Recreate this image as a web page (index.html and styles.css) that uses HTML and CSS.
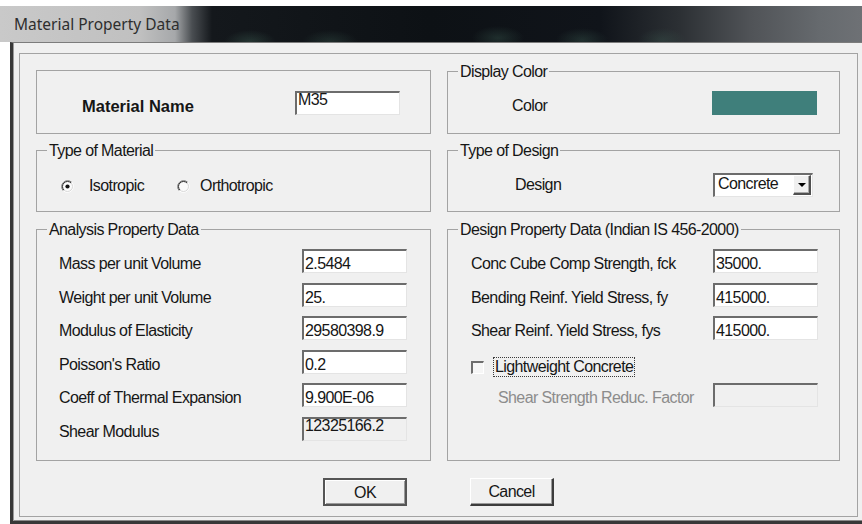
FILE: index.html
```html
<!DOCTYPE html>
<html lang="en">
<head>
<meta charset="utf-8">
<title>Material Property Data</title>
<link rel="stylesheet" href="styles.css">
</head>
<body>
<div class="screen">
  <div class="titlebar"><span class="title">Material Property Data</span></div>
  <div class="frame">
    <div class="panel">
      <div class="columns">
        <div class="col">
          <div class="namebox">
            <span class="name-label">Material Name</span>
            <span class="field top">M35</span>
          </div>
          <fieldset class="group g-short g-mid">
            <legend>Type of Material</legend>
            <div class="radios">
              <span class="radio">
                <svg class="radio-ico" width="13" height="13" viewBox="0 0 13 13">
                  <circle cx="6.5" cy="6.5" r="5.5" fill="#fbfbfb"/>
                  <path d="M10.74 2.26A6 6 0 0 0 2.26 10.74" fill="none" stroke="#7a7a7a"/>
                  <path d="M10.04 2.96A5 5 0 0 0 2.96 10.04" fill="none" stroke="#2e2e2e"/>
                  <path d="M2.26 10.74A6 6 0 0 0 10.74 2.26" fill="none" stroke="#ffffff"/>
                  <path d="M2.96 10.04A5 5 0 0 0 10.04 2.96" fill="none" stroke="#d8d8d8"/>
                  <circle cx="6.5" cy="6.5" r="2.1" fill="#111"/>
                </svg>
                <span class="radio-text iso">Isotropic</span>
              </span>
              <span class="radio second">
                <svg class="radio-ico" width="13" height="13" viewBox="0 0 13 13">
                  <circle cx="6.5" cy="6.5" r="5.5" fill="#fbfbfb"/>
                  <path d="M10.74 2.26A6 6 0 0 0 2.26 10.74" fill="none" stroke="#7a7a7a"/>
                  <path d="M10.04 2.96A5 5 0 0 0 2.96 10.04" fill="none" stroke="#2e2e2e"/>
                  <path d="M2.26 10.74A6 6 0 0 0 10.74 2.26" fill="none" stroke="#ffffff"/>
                  <path d="M2.96 10.04A5 5 0 0 0 10.04 2.96" fill="none" stroke="#d8d8d8"/>
                </svg>
                <span class="radio-text ortho">Orthotropic</span>
              </span>
            </div>
          </fieldset>
          <fieldset class="group g-tall">
            <legend>Analysis Property Data</legend>
            <div class="rows rows-left">
              <div class="row"><span class="lbl">Mass per unit Volume</span><span class="field">2.5484</span></div>
              <div class="row"><span class="lbl">Weight per unit Volume</span><span class="field">25.</span></div>
              <div class="row"><span class="lbl">Modulus of Elasticity</span><span class="field">29580398.9</span></div>
              <div class="row"><span class="lbl">Poisson's Ratio</span><span class="field">0.2</span></div>
              <div class="row"><span class="lbl">Coeff of Thermal Expansion</span><span class="field">9.900E-06</span></div>
              <div class="row"><span class="lbl">Shear Modulus</span><span class="field top disabled">12325166.2</span></div>
            </div>
          </fieldset>
        </div>

        <div class="col">
          <fieldset class="group g-color">
            <legend>Display Color</legend>
            <div class="color-row">
              <span class="lbl">Color</span>
              <span class="swatch"></span>
            </div>
          </fieldset>
          <fieldset class="group g-short g-mid">
            <legend>Type of Design</legend>
            <div class="design-row">
              <span class="lbl">Design</span>
              <span class="combo">
                <span class="combo-text">Concrete</span>
                <span class="combo-btn">
                  <svg width="8" height="4" viewBox="0 0 8 4"><path d="M0 0H8L4 4Z" fill="#000"/></svg>
                </span>
              </span>
            </div>
          </fieldset>
          <fieldset class="group g-tall">
            <legend>Design Property Data (Indian IS 456-2000)</legend>
            <div class="rows rows-right">
              <div class="row"><span class="lbl">Conc Cube Comp Strength, fck</span><span class="field">35000.</span></div>
              <div class="row"><span class="lbl">Bending Reinf. Yield Stress, fy</span><span class="field">415000.</span></div>
              <div class="row"><span class="lbl">Shear Reinf. Yield Stress, fys</span><span class="field">415000.</span></div>
              <div class="row check-row">
                <span class="checkbox"></span>
                <span class="check-text">Lightweight Concrete</span>
              </div>
              <div class="row"><span class="lbl dim indent">Shear Strength Reduc. Factor</span><span class="field disabled"></span></div>
            </div>
          </fieldset>
        </div>
      </div>

      <div class="buttons">
        <span class="btn default">OK</span>
        <span class="btn">Cancel</span>
      </div>
    </div>
  </div>
</div>
</body>
</html>
```

FILE: styles.css
```css
* {
  box-sizing: border-box;
}

html,
body {
  margin: 0;
  padding: 0;
  background: #ffffff;
}

body {
  width: 862px;
  height: 524px;
  overflow: hidden;
  font-family: "Liberation Sans", Arial, sans-serif;
  font-size: 16px;
  letter-spacing: -0.6px;
  color: #161616;
}

.screen {
  padding-top: 6px;
}

/* Glass caption bar */
.titlebar {
  height: 36px;
  display: flex;
  align-items: center;
  padding-left: 14px;
  background:
    radial-gradient(ellipse 26px 12px at 250px 36px, rgba(70, 110, 95, 0.35), rgba(70, 110, 95, 0)),
    radial-gradient(ellipse 28px 12px at 330px 36px, rgba(70, 110, 95, 0.28), rgba(70, 110, 95, 0)),
    radial-gradient(ellipse 26px 12px at 498px 32px, rgba(70, 110, 95, 0.3), rgba(70, 110, 95, 0)),
    radial-gradient(ellipse 26px 12px at 582px 34px, rgba(70, 110, 95, 0.3), rgba(70, 110, 95, 0)),
    radial-gradient(ellipse 24px 12px at 662px 34px, rgba(70, 110, 95, 0.25), rgba(70, 110, 95, 0)),
    linear-gradient(90deg, #c9c9c9 0, #c0c0c0 140px, #a6a8aa 175px, #4a4e52 192px, #14181c 212px, #0d1115 430px, #10141a 600px, #2c3034 680px, #505357 750px, #666a6e 820px, #6e7175 862px);
}

.title {
  font-family: "Noto Sans", "Open Sans", sans-serif;
  font-size: 15.5px;
  letter-spacing: 0;
  color: #2e2e2e;
}

/* Window frame */
.frame {
  margin-left: 10px;
  height: 482px;
  border-top: 1px solid #7c7c7c;
  border-left: 3px solid #383838;
  border-bottom: 3px solid #383838;
  box-shadow: inset 1px 0 0 #9a9a9a, inset 0 -1px 0 #8a8a8a;
  background: #f0f0f0;
  padding: 10px 0 0 6px;
}

.panel {
  width: 839px;
  height: 464px;
  border: 1px solid #a3a3a3;
  padding: 0 16px;
  display: flex;
  flex-direction: column;
}

.columns {
  display: grid;
  grid-template-columns: 395px 393px;
  column-gap: 16px;
}

.col {
  display: flex;
  flex-direction: column;
}

/* Group boxes */
.group {
  margin: 0;
  padding: 0;
  min-width: 0;
  border: 1px solid #a3a3a3;
}

.group legend {
  margin-left: 10px;
  padding: 2px 2px 0;
  line-height: 18px;
}

.g-color {
  margin-top: 7px;
  height: 73px;
}

.g-mid {
  margin-top: 6px;
}

.g-short {
  height: 72px;
}

.g-tall {
  margin-top: 7px;
  height: 242px;
}

/* Material name box */
.namebox {
  margin-top: 16px;
  height: 64px;
  border: 1px solid #a3a3a3;
  padding: 20px 0 0 45px;
  display: flex;
  align-items: flex-start;
}

.name-label {
  width: 213px;
  margin-top: 6px;
  font-weight: bold;
  font-size: 16.5px;
  letter-spacing: 0;
  line-height: 18px;
}

/* Text fields */
.field {
  display: block;
  width: 105px;
  height: 24px;
  overflow: hidden;
  background: #ffffff;
  border-style: solid;
  border-width: 2px 1px 1px 2px;
  border-color: #6c6c6c #e4e4e4 #e4e4e4 #6c6c6c;
  padding: 4px 0 0 1px;
  line-height: 18px;
  white-space: nowrap;
}

.field.top {
  padding-top: 0;
  line-height: 14px;
}

.field.disabled {
  background: #f0f0f0;
}

.lbl {
  line-height: 18px;
  white-space: nowrap;
}

.dim {
  color: #8c8c8c;
}

/* Label/field rows */
.rows {
  padding-top: 10px;
  display: flex;
  flex-direction: column;
  row-gap: 9.6px;
}

.rows-left {
  padding-left: 22px;
}

.rows-right {
  padding-left: 23px;
}

.row {
  height: 24px;
  display: grid;
  align-items: end;
}

.rows-left .row {
  grid-template-columns: 243px 105px;
}

.rows-right .row {
  grid-template-columns: 242px 105px;
}

.indent {
  padding-left: 27px;
}

.check-row {
  display: flex;
  align-items: flex-start;
}

.checkbox {
  width: 13px;
  height: 13px;
  margin-top: 11px;
  background: #f6f6f6;
  border-style: solid;
  border-width: 2px 1px 1px 2px;
  border-color: #6e6e6e #ffffff #ffffff #6e6e6e;
}

.check-text {
  margin: 8px 0 0 10px;
  padding: 0 1px;
  line-height: 18px;
  outline: 1px dotted #3a3a3a;
}

/* Radio buttons */
.radios {
  padding: 17px 0 0 24px;
  display: flex;
  align-items: center;
  height: 35px;
  line-height: 18px;
}

.radio {
  display: flex;
  align-items: center;
}

.radio-ico {
  display: block;
}

.iso {
  margin-left: 15px;
}

.second {
  margin-left: 33px;
}

.ortho {
  margin-left: 10px;
}

/* Display color */
.color-row {
  padding: 10px 0 0 64px;
  height: 34px;
  display: grid;
  grid-template-columns: 200px 105px;
  align-items: end;
}

.swatch {
  display: block;
  height: 24px;
  background: #3f7f7b;
}

/* Design combo */
.design-row {
  padding: 13px 0 0 67px;
  display: grid;
  grid-template-columns: 198px 100px;
  align-items: center;
}

.combo {
  height: 24px;
  display: flex;
  align-items: stretch;
  background: #ffffff;
  border-style: solid;
  border-width: 2px 1px 1px 2px;
  border-color: #6c6c6c #e4e4e4 #e4e4e4 #6c6c6c;
}

.combo-text {
  flex: 1;
  padding-left: 3px;
  line-height: 18px;
}

.combo-btn {
  width: 18px;
  margin: 0 1px 1px 0;
  display: flex;
  align-items: center;
  justify-content: center;
  background: #f0f0f0;
  border-style: solid;
  border-width: 1px 2px 2px 1px;
  border-color: #ffffff #505050 #505050 #ffffff;
  box-shadow: inset -1px -1px 0 #a8a8a8;
}

/* Dialog buttons */
.buttons {
  margin-top: 17px;
  display: flex;
  justify-content: center;
  column-gap: 63px;
}

.btn {
  width: 84px;
  height: 28px;
  display: flex;
  align-items: center;
  justify-content: center;
  line-height: 18px;
  padding-top: 1px;
  background: #f0f0f0;
  border-style: solid;
  border-width: 1px 2px 2px 1px;
  border-color: #ffffff #3c3c3c #3c3c3c #ffffff;
  box-shadow: inset -1px -1px 0 #9a9a9a;
}

.btn.default {
  border-width: 2px;
  border-color: #555555;
  box-shadow: inset 1px 1px 0 #ffffff, inset -1px -1px 0 #9a9a9a;
}
```
